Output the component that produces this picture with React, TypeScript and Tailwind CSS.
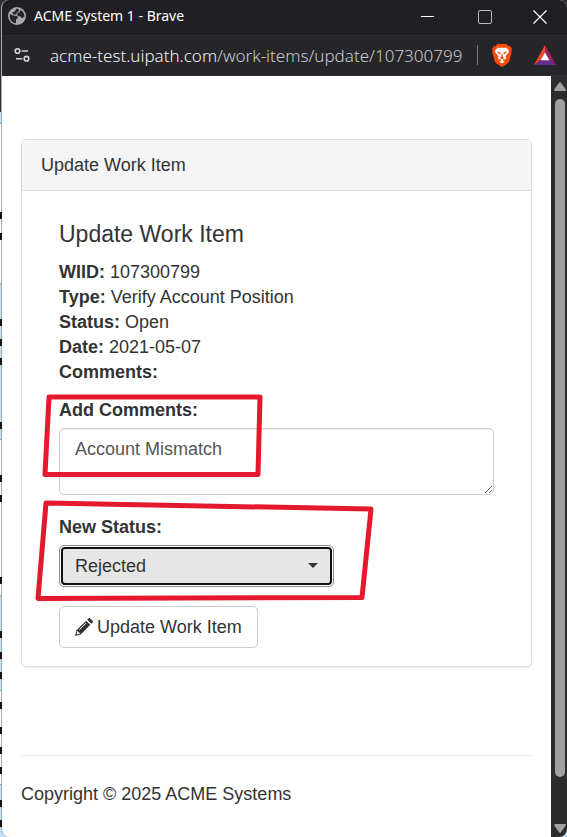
import type { ReactNode } from "react";

function Detail({ label, children }: { label: string; children?: ReactNode }) {
  return (
    <p>
      <strong>{label}</strong> {children}
    </p>
  );
}

function Globe() {
  return (
    <svg className="h-[18px] w-[18px] shrink-0" viewBox="0 0 18 18" aria-hidden="true">
      <circle cx="9" cy="9" r="9" fill="#a5a9ae" />
      <path
        d="M1.8 7 5 8.600l4 .5.900 2-2 1.500.2 3.600C4.200 15.900 1.800 12.900 1.700 9.200ZM8.200 1.700l2.500.2v2.500L8.600 5.800 8.200 7.600 4.900 7.400 4.500 5.500 7.300 4ZM12.600 2.900c2.600 1.400 3.900 3.800 3.700 6.800l-2.400 1.500-1.700-2-2.500.1-.6-2.500 2.300-1.600Z"
        fill="#25262a"
      />
    </svg>
  );
}

function SiteSettings() {
  return (
    <svg className="h-4 w-4 shrink-0" viewBox="0 0 16 16" fill="none" stroke="#d5d5d9" strokeWidth="1.6" aria-hidden="true">
      <circle cx="3.500" cy="4" r="2.300" />
      <path d="M7.500 4h6.500M2 11.700h6.500" />
      <circle cx="12.500" cy="11.700" r="2.300" />
    </svg>
  );
}

function BraveLion() {
  return (
    <svg className="h-[23px] w-5" viewBox="0 0 20 23" aria-hidden="true">
      <path d="M5.5 0h9l1.700 2 1.800-.1 2 3-.8 2 .4 1.500-2.200 8.400c-.4 1.500-1.300 2.400-2.500 3.200L10 23l-4.900-3c-1.200-.8-2.100-1.700-2.500-3.200L.4 8.400.8 6.900 0 4.900l2-3 1.800.1Z" fill="#fb4a0c" />
      <path d="m5.800 3.400 2.500.6L10 3.500l1.700.5 2.500-.6L17 6.700l-.4 2-3.200 3.600.7 1.800-1 1.500-1.500-.3-1 1 2 1.500L10 19.600l-2.600-1.800 2-1.500-1-1-1.500.3-1-1.500.7-1.800-3.200-3.600-.4-2Z" fill="#fff" />
      <path d="m4.600 7.600 4 1-.5 2.200ZM15.400 7.600l-4 1 .5 2.200ZM9.600 9.500h.8l.4 3.500 1.600 1L10 15.200 7.600 14l1.600-1Z" fill="#fb4a0c" />
    </svg>
  );
}

function RewardsTriangle() {
  return (
    <svg className="h-5 w-[22px]" viewBox="0 0 22 20" aria-hidden="true">
      <path d="M11 0v7.500L6.500 15 0 20Z" fill="#ff4724" />
      <path d="M11 0 22 20l-6.500-5L11 7.500Z" fill="#9e1f63" />
      <path d="M0 20h22l-6.500-5h-9Z" fill="#662d91" />
      <path d="m11 7.500 4.500 7.800h-9Z" fill="#fff" />
    </svg>
  );
}

function Pencil() {
  return (
    <svg className="h-[18px] w-[18px] shrink-0" viewBox="0 0 18 18" aria-hidden="true">
      <path d="M12.200 1.700 13.500.4c.5-.5 1.200-.5 1.700 0l2.400 2.400c.5.500.5 1.200 0 1.700l-1.300 1.300Z" fill="#333" />
      <path d="m11.200 2.700 4.100 4.100L5.700 16.400 0 18l1.600-5.700Z" fill="#333" />
      <path d="m4.500 11.600 6.500-6.500M2.600 13.500l2 2-2.400.5Z" fill="none" stroke="#fff" strokeWidth="1" />
    </svg>
  );
}

function TitleBar() {
  return (
    <header className="bg-[#1f1f24] text-white">
      <div className="flex h-[35px] items-center justify-between pl-1.5">
        <div className="flex items-center gap-2 pb-1 font-['Noto_Sans',sans-serif] text-sm">
          <Globe />
          <h1>ACME System 1 - Brave</h1>
        </div>
        <div className="flex items-center pb-0.5">
          <button aria-label="Minimize" className="flex w-[57px] justify-center">
            <span className="h-px w-[13px] bg-white" />
          </button>
          <button aria-label="Maximize" className="flex w-[57px] justify-center">
            <span className="h-3.5 w-3.5 rounded-xs border border-[#bbb]" />
          </button>
          <button aria-label="Close" className="flex w-[54px] justify-center">
            <svg className="h-3.5 w-3.5" viewBox="0 0 14 14" stroke="#fff" strokeWidth="1.200" aria-hidden="true">
              <path d="m.5.5 13 13M13.500.5l-13 13" />
            </svg>
          </button>
        </div>
      </div>
      <div className="flex h-[41px] items-center border-t border-b border-t-[#2d2d32] border-b-[#302b35] bg-[#25252a] pr-[11px] pb-px pl-3">
        <SiteSettings />
        <span className="ml-5 min-w-0 flex-1 truncate font-['Noto_Sans',sans-serif] text-[17px] font-light text-[#cacace]">
          <span className="text-[#f1f1f3]">acme-test.uipath.com</span>/work-items/update/107300799
        </span>
        <span className="mr-3.5 h-5 w-px bg-[#777980]" />
        <button aria-label="Brave Shields" className="mr-[22px]">
          <BraveLion />
        </button>
        <button aria-label="Brave Rewards">
          <RewardsTriangle />
        </button>
      </div>
    </header>
  );
}

function ScrollBar() {
  return (
    <div className="flex w-4 shrink-0 flex-col items-center bg-[#2c2c2c] pt-[6px] pb-1 pl-0.5" aria-hidden="true">
      <svg className="h-[9px] w-3" viewBox="0 0 12 9" fill="#a0a0a0">
        <path d="M5 .8q1-1.400 2 0l4.600 6.500q.7 1.700-1 1.700H1.400q-1.700 0-1-1.700Z" />
      </svg>
      <div className="mt-2 mb-[47px] w-2.5 flex-1 rounded-full bg-[#a0a0a0]" />
      <svg className="h-[9px] w-3" viewBox="0 0 12 9" fill="#a0a0a0">
        <path d="M5 8.200q1 1.400 2 0l4.600-6.500q.7-1.700-1-1.700H1.400q-1.700 0-1 1.700Z" />
      </svg>
    </div>
  );
}

function WorkItemForm() {
  return (
    <section className="rounded-[5px] border border-[#ddd] shadow-[0_1px_1px_rgba(0,0,0,0.05)]">
      <h2 className="border-b border-[#ddd] bg-[#f5f5f5] px-[19px] pt-[13px] pb-3">Update Work Item</h2>
      <form className="px-[37px] pt-[30px] pb-[18px]" onSubmit={(e) => e.preventDefault()}>
        <h3 className="mb-[13px] text-[23px] leading-[26px]">Update Work Item</h3>
        <Detail label="WIID:">107300799</Detail>
        <Detail label="Type:">Verify Account Position</Detail>
        <Detail label="Status:">Open</Detail>
        <Detail label="Date:">2021-05-07</Detail>
        <Detail label="Comments:" />
        <label htmlFor="comments" className="mt-[13px] mb-[5px] block font-bold">
          Add Comments:
        </label>
        <textarea
          id="comments"
          defaultValue="Account Mismatch"
          className="block h-[67px] w-full resize-y rounded-[5px] border border-[#ccc] px-[15px] py-2 text-[#555] shadow-[inset_0_1px_1px_rgba(0,0,0,0.075)]"
        />
        <label htmlFor="status" className="mt-5 mb-[5px] block font-bold">
          New Status:
        </label>
        <div className="relative w-[275px] rounded-[5px] border border-[#8c8c8c] p-px">
          <select
            id="status"
            defaultValue="Rejected"
            className="block h-[38px] w-full appearance-none rounded-[4px] border-2 border-[#101010] bg-[#e6e6e6] px-3"
          >
            <option>Open</option>
            <option>Rejected</option>
            <option>Completed</option>
          </select>
          <svg className="pointer-events-none absolute top-[17px] right-[15px] h-[5px] w-2.5" viewBox="0 0 10 5" fill="#333" aria-hidden="true">
            <path d="M0 0h10L5 5Z" />
          </svg>
        </div>
        <button
          type="submit"
          className="mt-[19px] flex h-[42px] items-center gap-1 rounded-[5px] border border-[#ccc] bg-white px-[15px]"
        >
          <Pencil />
          Update Work Item
        </button>
      </form>
    </section>
  );
}

const backdrop = [
  "h-[36px] bg-[#303030]",
  "h-[11px] bg-[#bde3fb]",
  "h-[160px] border-t border-[#56b2e3] bg-white",
  "h-[157px] border-y border-[#56b2e3] bg-[#bde3fb]",
  "h-[155px] bg-white",
  "h-[96px] border-y border-[#56b2e3] bg-[#bde3fb]",
  "h-[93px] bg-white",
  "flex-1 border-t border-[#56b2e3] bg-[#bde3fb]",
];

const backdropMarks = [212, 233, 319, 339, 358, 422, 475, 495, 577, 631, 652, 672, 702, 727, 747, 767, 800, 820];

export default function App() {
  return (
    <div className="relative flex min-h-screen bg-[#bde3fb] font-['Liberation_Sans',Arial,sans-serif] text-lg leading-[25px] text-[#333]">
      <div className="flex w-px shrink-0 flex-col bg-[#303030] pt-[76px]" aria-hidden="true">
        {backdrop.map((shade) => (
          <div key={shade} className={shade} />
        ))}
      </div>
      <div className="flex min-w-0 flex-1 flex-col bg-linear-to-b from-[#303030] from-50% to-[#bde3fb] to-50%">
        <div className="flex flex-1 flex-col overflow-hidden rounded-lg border-l border-[#aaa] bg-white">
          <TitleBar />
          <div className="flex flex-1">
            <main className="flex min-w-0 flex-1 flex-col px-[19px] pt-[63px] pb-[30px]">
              <WorkItemForm />
              <footer className="mt-[88px] border-t border-[#eee] pt-[26px]">Copyright © 2025 ACME Systems</footer>
            </main>
            <ScrollBar />
          </div>
        </div>
      </div>
      <div aria-hidden="true">
        {backdropMarks.map((y) => (
          <span key={y} className="absolute left-0 h-[7px] w-0.5 bg-[#151515]" style={{ top: y }} />
        ))}
      </div>
      <svg
        className="pointer-events-none absolute top-[390px] left-[30px] h-[220px] w-[350px]"
        viewBox="30 390 350 220"
        fill="none"
        stroke="#e5192d"
        strokeWidth="5"
        strokeLinejoin="round"
        aria-hidden="true"
      >
        <path d="M49 397 260 397 258 474.500 45 474.500Z" />
        <path d="M46 503 371 509 362 597.500 38 598.500Z" />
      </svg>
    </div>
  );
}
